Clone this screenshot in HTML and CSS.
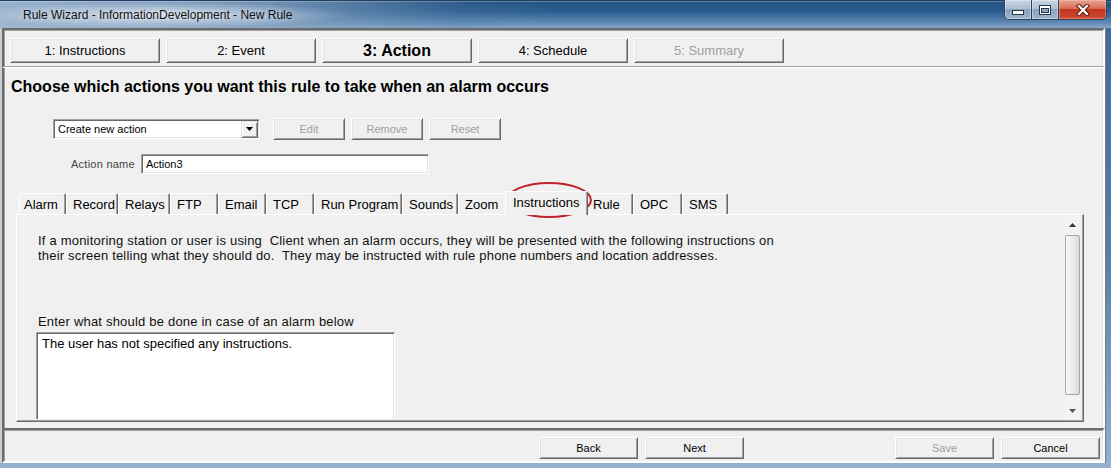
FILE: index.html
```html
<!DOCTYPE html>
<html lang="en">
<head>
<meta charset="utf-8">
<title>Rule Wizard - InformationDevelopment - New Rule</title>
<link rel="stylesheet" href="styles.css">
</head>
<body>
<div class="window">
  <div class="titlebar">
    <span class="title">Rule Wizard - InformationDevelopment - New Rule</span>
    <div class="caption-btns">
      <span class="cb cb-min"><svg width="12" height="6" viewBox="0 0 12 6"><rect x="0.5" y="0.5" width="11" height="4" fill="#fff" stroke="#26374b"/></svg></span>
      <span class="cb cb-max"><svg width="12" height="10" viewBox="0 0 12 10"><rect x="0.5" y="0.5" width="11" height="9" fill="#fff" stroke="#26374b"/><rect x="2.5" y="3.5" width="7" height="4" fill="#8aa3bf" stroke="#26374b"/></svg></span>
      <span class="cb cb-close"><svg width="14" height="12" viewBox="0 0 14 12"><path d="M3 2 L11 10 M11 2 L3 10" stroke="#5a1a12" stroke-width="4.2" stroke-linecap="square" fill="none"/><path d="M3 2 L11 10 M11 2 L3 10" stroke="#fff" stroke-width="2.2" stroke-linecap="square" fill="none"/></svg></span>
    </div>
  </div>
  <div class="client">
    <div class="steps frame">
      <button class="btn step">1: Instructions</button>
      <button class="btn step">2: Event</button>
      <button class="btn step current">3: Action</button>
      <button class="btn step">4: Schedule</button>
      <button class="btn step disabled">5: Summary</button>
    </div>
    <div class="main frame">
      <h1 class="heading">Choose which actions you want this rule to take when an alarm occurs</h1>
      <div class="action-row">
        <div class="combo">
          <span class="combo-text">Create new action</span>
          <span class="combo-arrow"><svg width="7" height="4" viewBox="0 0 7 4"><path d="M0 0 H7 L3.5 4 Z" fill="#000"/></svg></span>
        </div>
        <button class="btn small disabled">Edit</button>
        <button class="btn small disabled">Remove</button>
        <button class="btn small disabled">Reset</button>
      </div>
      <div class="name-row">
        <span class="name-label">Action name</span>
        <div class="field">Action3</div>
      </div>
      <div class="tabs">
        <span class="tab tab-alarm">Alarm</span>
        <span class="tab tab-record">Record</span>
        <span class="tab tab-relays">Relays</span>
        <span class="tab tab-ftp">FTP</span>
        <span class="tab tab-email">Email</span>
        <span class="tab tab-tcp">TCP</span>
        <span class="tab tab-run">Run Program</span>
        <span class="tab tab-sounds">Sounds</span>
        <span class="tab tab-zoom">Zoom</span>
        <span class="tab tab-instr selected">Instructions</span>
        <span class="tab tab-rule">Rule</span>
        <span class="tab tab-opc">OPC</span>
        <span class="tab tab-sms">SMS</span>
      </div>
      <div class="panel">
        <div class="panel-body">
          <p class="intro">If a monitoring station or user is using&nbsp; Client when an alarm occurs, they will be presented with the following instructions on<br>their screen telling what they should do.&nbsp; They may be instructed with rule phone numbers and location addresses.</p>
          <div class="ta-label">Enter what should be done in case of an alarm below</div>
          <div class="textarea">The user has not specified any instructions.</div>
        </div>
        <div class="vscroll">
          <span class="sb-btn"><svg width="7" height="4" viewBox="0 0 7 4"><path d="M0 4 H7 L3.5 0 Z" fill="#333"/></svg></span>
          <span class="sb-track"><span class="sb-thumb"></span></span>
          <span class="sb-btn"><svg width="7" height="4" viewBox="0 0 7 4"><path d="M0 0 H7 L3.5 4 Z" fill="#555"/></svg></span>
        </div>
      </div>
    </div>
    <div class="footer frame">
      <div class="btn-group nav">
        <button class="btn foot">Back</button>
        <button class="btn foot">Next</button>
      </div>
      <div class="btn-group act">
        <button class="btn foot disabled">Save</button>
        <button class="btn foot">Cancel</button>
      </div>
    </div>
  </div>
  <div class="annot"></div>
</div>
</body>
</html>
```

FILE: styles.css
```css
* { box-sizing: border-box; }
html, body { margin: 0; padding: 0; }
body {
  width: 1111px;
  height: 468px;
  overflow: hidden;
  background: #6d92b8;
  font-family: "Liberation Sans", Arial, sans-serif;
  color: #000;
}
.window {
  position: relative;
  width: 1111px;
  height: 468px;
  display: flex;
  flex-direction: column;
  padding: 0 5px 5px 0;
  background: linear-gradient(180deg, #3b6a9a 0%, #5580ab 55%, #93b1cf 100%);
}

/* title bar */
.titlebar {
  height: 28px;
  flex: none;
  margin-right: -5px;
  display: flex;
  align-items: flex-start;
  box-shadow: inset 0 1px #203f60, inset 0 2px rgba(255,255,255,0.25);
  background:
    radial-gradient(ellipse 190px 13px at 160px 15px, rgba(226,233,241,0.9), rgba(226,233,241,0) 100%),
    linear-gradient(90deg, rgba(160,183,208,0.95) 0px, rgba(140,167,196,0.75) 260px, rgba(90,130,170,0.2) 460px, rgba(90,130,170,0) 560px),
    linear-gradient(180deg, #21507f 0%, #2c5d90 40%, #5a86b2 78%, #86a8c8 100%);
}
.title {
  padding: 7px 0 0 23px;
  font-size: 12px;
  line-height: 16px;
  color: #111;
  white-space: nowrap;
  text-shadow: 0 0 6px rgba(255,255,255,0.6);
}
.caption-btns {
  margin-left: auto;
  margin-right: 4px;
  display: flex;
  height: 20px;
  border: 1px solid #2f4258;
  border-top: none;
  border-radius: 0 0 5px 5px;
  overflow: hidden;
}
.cb {
  display: flex;
  align-items: center;
  justify-content: center;
  height: 100%;
}
.cb-min, .cb-max {
  width: 27px;
  border-right: 1px solid #2f4258;
  background: linear-gradient(180deg, #c7d5e3 0%, #aebfd2 45%, #8ba4bf 50%, #9db4cd 100%);
  box-shadow: inset 0 0 0 1px rgba(255,255,255,0.35);
}
.cb-min svg { margin-top: 6px; }
.cb-close {
  width: 47px;
  background: linear-gradient(180deg, #e8a392 0%, #d66d57 45%, #c0351f 50%, #d04a30 100%);
  box-shadow: inset 0 0 0 1px rgba(255,210,200,0.35);
}

/* client area */
.client {
  flex: 1;
  display: flex;
  flex-direction: column;
  background: #f0f0f0;
  border-left: 2px solid #c7ced6;
  border-right: 1px solid #7a7a7a;
}
.frame {
  border-left: 2px solid #6b6b6b;
  border-right: 2px solid #fff;
  box-shadow: inset 1px 0 #a0a0a0, inset -1px 0 #e3e3e3;
}
.steps {
  height: 39px;
  flex: none;
  display: flex;
  gap: 6px;
  padding: 8px 0 0 6px;
  border-top: 2px solid #6b6b6b;
  border-bottom: 1px solid #a0a0a0;
  box-shadow: inset 1px 0 #a0a0a0, inset 0 1px #a0a0a0, inset -1px 0 #e3e3e3;
}
.btn {
  display: flex;
  align-items: center;
  justify-content: center;
  margin: 0;
  padding: 0;
  font-family: "Liberation Sans", Arial, sans-serif;
  color: #000;
  background: #f0f0f0;
  border: 1px solid;
  border-color: #fff #696969 #696969 #fff;
  box-shadow: inset 1px 1px #e3e3e3, inset -1px -1px #a0a0a0;
  border-radius: 0;
}
.btn.disabled { color: #a0a0a0; }
.step {
  width: 150px;
  height: 25px;
  font-size: 13px;
}
.step.current {
  font-size: 16px;
  font-weight: bold;
}

.main {
  height: 361px;
  flex: none;
  border-top: 1px solid #fff;
  display: flex;
  flex-direction: column;
  align-items: flex-start;
}
.heading {
  margin: 9px 0 0 7px;
  font-size: 16px;
  line-height: 20px;
  font-weight: bold;
  white-space: nowrap;
}
.action-row {
  margin: 21px 0 0 49px;
  height: 22px;
  display: flex;
  align-items: center;
}
.combo {
  width: 207px;
  height: 20px;
  display: flex;
  align-items: center;
  background: #fff;
  border: 1px solid;
  border-color: #a0a0a0 #fff #fff #a0a0a0;
  box-shadow: inset 1px 1px #696969, inset -1px -1px #e3e3e3;
  padding: 1px;
  margin-right: 13px;
}
.combo-text {
  flex: 1;
  font-size: 11px;
  padding-left: 3px;
}
.combo-arrow {
  width: 17px;
  height: 17px;
  display: flex;
  align-items: center;
  justify-content: center;
  background: #f0f0f0;
  border: 1px solid;
  border-color: #e3e3e3 #696969 #696969 #e3e3e3;
  box-shadow: inset 1px 1px #fff, inset -1px -1px #a0a0a0;
}
.small {
  width: 72px;
  height: 22px;
  font-size: 11px;
  margin-right: 6px;
}
.name-row {
  margin: 14px 0 0 67px;
  height: 20px;
  display: flex;
  align-items: center;
}
.name-label {
  font-size: 11px;
  color: #444;
  letter-spacing: 0.25px;
  margin-right: 6px;
}
.field {
  width: 288px;
  height: 20px;
  font-size: 11px;
  line-height: 16px;
  padding: 1px 0 0 4px;
  background: #fff;
  border: 1px solid;
  border-color: #a0a0a0 #fff #fff #a0a0a0;
  box-shadow: inset 1px 1px #696969, inset -1px -1px #e3e3e3;
}

/* tabs */
.tabs {
  margin: 19px 0 0 15px;
  height: 21px;
  display: flex;
  align-items: flex-end;
}
.tab {
  height: 21px;
  font-size: 13px;
  line-height: 15px;
  padding: 3px 0 0 6px;
  white-space: nowrap;
  background: #f0f0f0;
  border-top: 1px solid #fff;
  border-left: 1px solid #fff;
  border-right: 1px solid #696969;
  box-shadow: inset -1px 0 #a0a0a0;
  border-radius: 2px 2px 0 0;
}
.tab-alarm { width: 47px; padding-left: 4px; }
.tab-record { width: 52px; }
.tab-relays { width: 52px; }
.tab-ftp { width: 48px; }
.tab-email { width: 48px; }
.tab-tcp { width: 48px; }
.tab-run { width: 88px; }
.tab-sounds { width: 56px; }
.tab-zoom { width: 49px; }
.tab-instr { width: 79px; }
.tab-rule { width: 47px; }
.tab-opc { width: 49px; }
.tab-sms { width: 46px; }
.tab.selected {
  position: relative;
  z-index: 1;
  width: 83px;
  height: 24px;
  margin: 0 -2px -1px -2px;
  padding-left: 7px;
}

/* panel */
.panel {
  margin-left: 12px;
  width: 1068px;
  height: 208px;
  display: flex;
  border-top: 1px solid #fff;
  border-left: 1px solid #fff;
  border-right: 1px solid #696969;
  border-bottom: 1px solid #696969;
  box-shadow: inset -1px -1px #a0a0a0;
}
.panel-body {
  flex: 1;
  overflow: hidden;
  padding: 18px 0 0 21px;
  height: 204px;
}
.intro {
  margin: 0;
  font-size: 13px;
  line-height: 15px;
  letter-spacing: 0.2px;
  white-space: nowrap;
  color: #111;
}
.ta-label {
  margin-top: 51px;
  font-size: 13px;
  line-height: 15px;
  letter-spacing: 0.2px;
  color: #111;
}
.textarea {
  margin: 3px 0 0 -2px;
  width: 359px;
  height: 100px;
  font-size: 13px;
  line-height: 15px;
  padding: 3px 0 0 5px;
  background: #fff;
  border: 1px solid;
  border-color: #a0a0a0 #fff #fff #a0a0a0;
  box-shadow: inset 1px 1px #696969, inset -1px -1px #e3e3e3;
}
.vscroll {
  width: 17px;
  height: 203px;
  margin: 1px 2px 0 0;
  display: flex;
  flex-direction: column;
  background: #f3f3f3;
}
.sb-btn {
  height: 17px;
  flex: none;
  display: flex;
  align-items: center;
  justify-content: center;
}
.sb-track {
  flex: 1;
  padding: 2px 1px 7px 1px;
  display: flex;
}
.sb-thumb {
  flex: 1;
  border: 1px solid #a7a7a7;
  border-radius: 2px;
  background: linear-gradient(90deg, #f7f7f7 0%, #ececec 50%, #d9d9d9 100%);
}

/* footer */
.footer {
  height: 35px;
  flex: none;
  display: flex;
  justify-content: flex-end;
  padding: 7px 3px 0 0;
  border-top: 2px solid #6b6b6b;
  border-bottom: 2px solid #fff;
  box-shadow: inset 1px 0 #a0a0a0, inset 0 1px #a0a0a0, inset -1px 0 #e3e3e3;
}
.btn-group {
  display: flex;
  height: 22px;
}
.nav { gap: 7px; margin-right: 151px; }
.act { gap: 7px; }
.foot {
  width: 99px;
  height: 22px;
  font-size: 11px;
}

/* annotation */
.annot {
  position: absolute;
  left: 506px;
  top: 182px;
  width: 86px;
  height: 36px;
  border: 2px solid #c0242b;
  border-radius: 50%;
  pointer-events: none;
}
```
